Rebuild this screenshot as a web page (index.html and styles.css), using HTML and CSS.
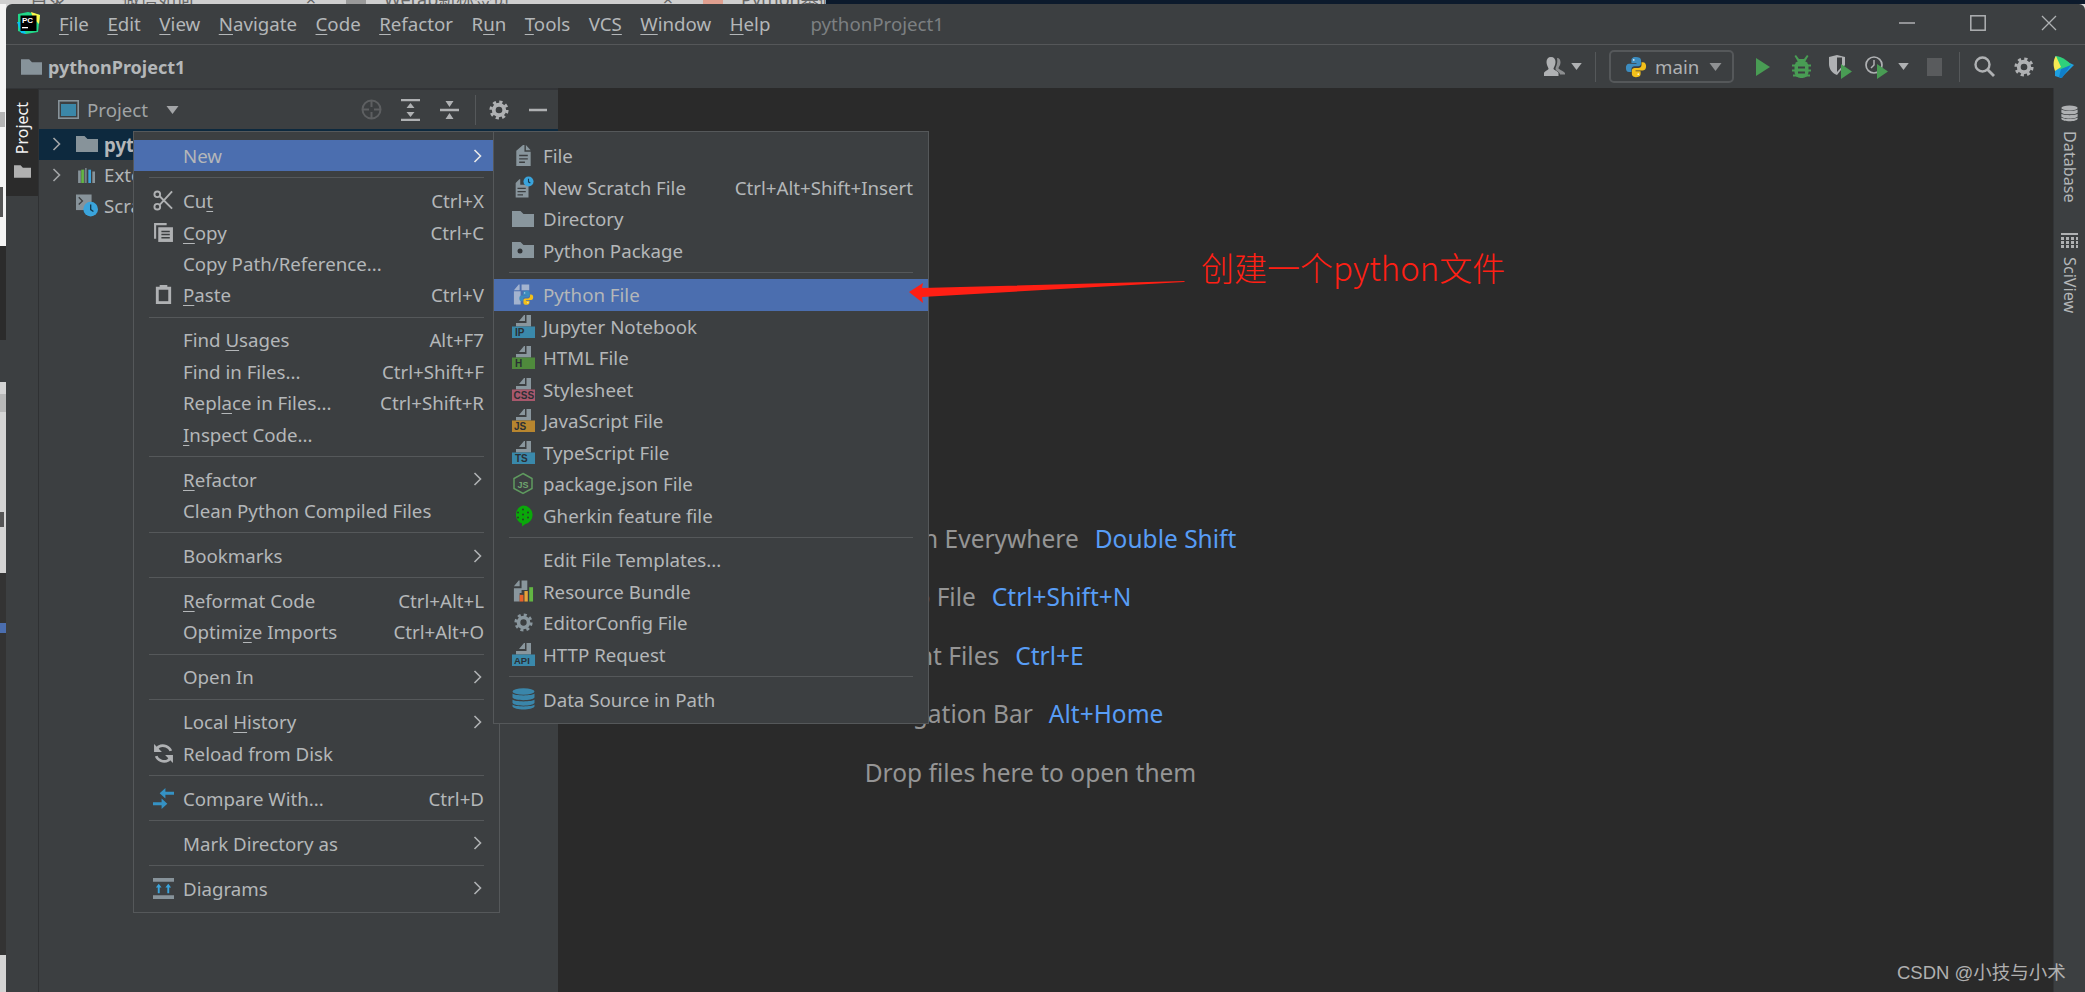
FILE: index.html
```html
<!DOCTYPE html>
<html lang="en">
<head>
<meta charset="utf-8">
<title>pythonProject1</title>
<link rel="stylesheet" href="styles.css">
</head>
<body>
<svg class="defs" xmlns="http://www.w3.org/2000/svg">
  <symbol id="i-folder" viewBox="0 0 22 16"><path d="M0 0h8.500l3 3H22v13H0z"/></symbol>
  <symbol id="i-file" viewBox="0 0 22 24"><path d="M11 1h1.500v7H19v15H4V7z" fill="#89969d"/><path d="M14 1l5 5.500h-5z" fill="#89969d"/><path d="M7 12h9M7 15.500h9M7 19h6" stroke="#3c3f41" stroke-width="1.500"/></symbol>
  <symbol id="i-scratch" viewBox="0 0 24 24"><path d="M8 3h1v6h9v14H4V7z" fill="#89969d"/><path d="M6 13h9M6 16.500h9M6 20h6" stroke="#3c3f41" stroke-width="1.500"/><circle cx="18" cy="5.500" r="5.500" fill="#3aa4dc"/><path d="M18 2.500v3.300l2 1.200" fill="none" stroke="#12394f" stroke-width="1.200"/></symbol>
  <symbol id="i-package" viewBox="0 0 22 16"><path d="M0 0h8.500l3 3H22v13H0z" fill="#89969d"/><circle cx="8" cy="9" r="2.500" fill="#2f3235"/></symbol>
  <symbol id="i-python" viewBox="0 0 24 24"><path d="M12 1C7.500 1 7 3 7 5v2.500h5.500v1H4.500C2 8.500 1 10.500 1 13s1 4.500 3.500 4.500H7v-3c0-2 1.500-3.300 3.500-3.300h4c1.700 0 3-1.200 3-3V4.500C17.500 2 15 1 12 1z" fill="#3c8cbf"/><path d="M12 23c4.500 0 5-2 5-4v-2.500h-5.500v-1h8c2.500 0 3.500-2 3.500-4.500s-1-4.500-3.500-4.500H18v3c0 2-1.500 3.300-3.500 3.300h-4c-1.700 0-3 1.200-3 3v3.700c0 2.500 2.500 3.500 4.500 3.500z" fill="#f3c01a" transform="translate(0 .2)"/><circle cx="9.500" cy="4.300" r="1" fill="#d8e6ee"/><circle cx="14.500" cy="19.800" r="1" fill="#fff3c0"/></symbol>
  <symbol id="i-gear" viewBox="0 0 24 24"><circle cx="12" cy="12" r="6.300" fill="none" stroke="currentColor" stroke-width="4.600"/><circle cx="12" cy="12" r="9.700" fill="none" stroke="currentColor" stroke-width="3.600" stroke-dasharray="3.800 3.820"/></symbol>
  <symbol id="i-db" viewBox="0 0 23 22"><g fill="currentColor"><ellipse cx="11.500" cy="3.500" rx="11" ry="3.300"/><path d="M.5 5.500c2 2.500 20 2.500 22 0v4c-2 3.500-20 3.500-22 0z"/><path d="M.5 11.500c2 2.500 20 2.500 22 0v3.500c-2 3.500-20 3.500-22 0z"/><path d="M.5 16.500c2 2.500 20 2.500 22 0v2c-2 4-20 4-22 0z"/></g></symbol>
  <symbol id="i-chevron" viewBox="0 0 9 14"><path d="M1.500 1l6 6-6 6" fill="none" stroke="currentColor" stroke-width="1.600"/></symbol>
  <symbol id="i-caret" viewBox="0 0 12 8"><path d="M0 0h12L6 8z" fill="currentColor"/></symbol>
  <symbol id="i-pagetop" viewBox="0 0 23 12"><path d="M12 0h1v6H7zM14.500 0H19v11.500H4V8h10.500z" fill="#89969d"/></symbol>
</svg>

<div class="page">
  <div class="top-strip">
    <div class="tab tab-first"><span class="tab-text">目录</span><span class="tab-text">微信如何</span><span class="tab-x">×</span></div>
    <div class="tab"><span class="tab-sq sq-grey"></span><span class="tab-text">Wetab新标签页</span><span class="tab-x">×</span></div>
    <div class="tab"><span class="tab-sq sq-pale"></span><span class="tab-text">Python基础入门与进阶</span><span class="tab-x">×</span></div>
    <div class="tab"><span class="tab-sq sq-red"></span><span class="tab-text">一文读懂Python</span><span class="tab-x">×</span></div>
    <div class="desk"></div>
  </div>
  <div class="left-strip">
    <div class="seg seg-a"><span class="frag frag-1"></span><span class="frag frag-2"></span></div>
    <div class="seg seg-b"></div>
    <div class="seg seg-c"></div>
    <div class="seg seg-d"><span class="frag frag-3"></span><span class="frag frag-4"></span></div>
    <div class="seg seg-e"><span class="frag frag-5"></span></div>
    <div class="seg seg-f"></div>
  </div>

  <div class="window">
    <header class="menubar">
      <svg class="pc-logo" viewBox="0 0 23 22" xmlns="http://www.w3.org/2000/svg">
        <path d="M1 2l10-2 12 3-2 17-12 2-8-3z" fill="#21d789"/>
        <path d="M14 0l9 3-1 9-6-6z" fill="#fcf84a"/>
        <path d="M0 10l4 11 5 1-5-12z" fill="#07c3f2"/>
        <rect x="3.500" y="3.500" width="16" height="15.500" fill="#000"/>
        <text x="5" y="11" class="pc-text">PC</text>
        <rect x="5" y="15" width="6" height="1.300" fill="#fff"/>
      </svg>
      <nav class="menus">
        <span><u>F</u>ile</span><span><u>E</u>dit</span><span><u>V</u>iew</span><span><u>N</u>avigate</span><span><u>C</u>ode</span><span><u>R</u>efactor</span><span>R<u>u</u>n</span><span><u>T</u>ools</span><span>VC<u>S</u></span><span><u>W</u>indow</span><span><u>H</u>elp</span>
      </nav>
      <span class="win-title">pythonProject1</span>
      <div class="win-controls">
        <svg viewBox="0 0 16 16"><path d="M0 8h16" stroke="#afb1b3" stroke-width="1.600"/></svg>
        <svg viewBox="0 0 16 16"><rect x=".8" y=".8" width="14.400" height="14.400" fill="none" stroke="#afb1b3" stroke-width="1.500"/></svg>
        <svg viewBox="0 0 16 16"><path d="M1 1l14 14M15 1L1 15" stroke="#afb1b3" stroke-width="1.300"/></svg>
      </div>
    </header>

    <div class="toolbar">
      <svg class="crumb-folder"><use href="#i-folder"/></svg>
      <span class="crumb">pythonProject1</span>
      <div class="tools">
        <svg class="t-user" viewBox="0 0 21 19"><path d="M7 0c3 0 4.500 2 4.500 5S10 10 9.500 11.500 14 14 14.500 16v3H0v-3c.5-2 5-3 4.500-4.500S2.500 8 2.500 5 4 0 7 0z" fill="#afb1b3"/><path d="M13 1c2.500 0 3.500 2 3.500 4.500s-1.500 4-2 5.500 5 2.500 6.500 5v1.500h-5c0-3-5-3.500-4.500-6S14 7 13 1z" fill="#8c8e90"/></svg>
        <svg class="t-caret"><use href="#i-caret"/></svg>
        <span class="t-sep sep-a"></span>
        <div class="combo">
          <svg class="combo-py"><use href="#i-python"/></svg>
          <span class="combo-text">main</span>
          <svg class="combo-caret"><use href="#i-caret"/></svg>
        </div>
        <svg class="t-run" viewBox="0 0 14 18"><path d="M0 0l14 9-14 9z" fill="#499c54"/></svg>
        <svg class="t-bug" viewBox="0 0 19 24"><g fill="#499c54"><path d="M4 0l3 4h5l3-4 1.500 1L13.500 6h-8L2.500 1z"/><rect x="2.500" y="5.500" width="14" height="17.500" rx="6"/><path d="M0 9.500h19v2H0zM0 14.500h19v2H0zM1 19.500h17v2H1z"/></g><path d="M6 12.500h7M6 17.500h7" stroke="#3c3f41" stroke-width="1.800"/></svg>
        <svg class="t-cov" viewBox="0 0 23 24"><path d="M0 2l8-2 8 2v8L8 20C3 18 0 14 0 9z" fill="#afb1b3"/><path d="M8 3v14C5 15 3 12 3 9V4z" fill="#afb1b3"/><path d="M8 2.500h5v9L8 17z" fill="#3c3f41"/><path d="M12 9l11 7.500L12 24z" fill="#499c54"/></svg>
        <svg class="t-prof" viewBox="0 0 23 24"><circle cx="9" cy="10" r="8" fill="none" stroke="#afb1b3" stroke-width="1.700"/><path d="M9 5v5l-3 3" fill="none" stroke="#afb1b3" stroke-width="1.500"/><path d="M12 9l11 7.500L12 24z" fill="#499c54"/></svg>
        <svg class="t-caret2"><use href="#i-caret"/></svg>
        <span class="t-stop"></span>
        <span class="t-sep sep-b"></span>
        <svg class="t-search" viewBox="0 0 21 21"><circle cx="8.500" cy="8.500" r="7" fill="none" stroke="#afb1b3" stroke-width="2.400"/><path d="M13.500 13.500l6.500 6.500" stroke="#afb1b3" stroke-width="2.800"/></svg>
        <svg class="t-gear"><use href="#i-gear"/></svg>
        <svg class="t-box" viewBox="0 0 21 24"><path d="M2 1l19 9-13 13L2 21z" fill="#1e9fe0"/><path d="M3 1c7 1 12 5 15 9L9 15 3 12z" fill="#2fd07b"/><path d="M3 1l5 11-6 4C0 11 0 5 3 1z" fill="#f4ea53"/><path d="M8 14l10-4-9 13-3-1z" fill="#107fc9"/></svg>
      </div>
    </div>

    <div class="workspace">
      <aside class="stripe-left">
        <div class="stripe-active">
          <span class="stripe-label">Project</span>
          <svg class="stripe-folder"><use href="#i-folder"/></svg>
        </div>
      </aside>

      <section class="project">
        <div class="project-head">
          <svg class="p-icon" viewBox="0 0 21 19"><rect x=".8" y=".8" width="19.400" height="17.400" fill="none" stroke="#87939a" stroke-width="1.600"/><rect x="3" y="4" width="15" height="12" fill="#3b87a8"/></svg>
          <span class="p-title">Project</span>
          <svg class="p-caret"><use href="#i-caret"/></svg>
          <svg class="p-locate" viewBox="0 0 21 21"><circle cx="10.500" cy="10.500" r="9" fill="none" stroke="#5d5f61" stroke-width="2"/><path d="M10.500 1v7M10.500 13v7M1 10.500h7M13 10.500h7" stroke="#5d5f61" stroke-width="2"/></svg>
          <svg class="p-expand" viewBox="0 0 19 22"><path d="M0 1h19M0 21h19" stroke="#afb1b3" stroke-width="2.400"/><path d="M9.500 4l4 5h-8zM9.500 18l4-5h-8z" fill="#afb1b3"/></svg>
          <svg class="p-collapse" viewBox="0 0 19 22"><path d="M0 11h19" stroke="#afb1b3" stroke-width="2.400"/><path d="M5.500 2h8l-4 6zM5.500 20h8l-4-6z" fill="#afb1b3"/></svg>
          <span class="p-sep"></span>
          <svg class="p-gear"><use href="#i-gear"/></svg>
          <svg class="p-hide" viewBox="0 0 18 4"><path d="M0 2h18" stroke="#afb1b3" stroke-width="2.400"/></svg>
        </div>
        <div class="tree">
          <div class="tree-row tree-selected">
            <svg class="tree-chev"><use href="#i-chevron"/></svg>
            <svg class="tree-icon tree-folder"><use href="#i-folder"/></svg>
            <b class="tree-text">pythonProject1</b>
          </div>
          <div class="tree-row">
            <svg class="tree-chev"><use href="#i-chevron"/></svg>
            <svg class="tree-icon" viewBox="0 0 22 18"><path d="M1 4h3v14H1zM17 5h3v13h-3z" fill="#87939a"/><path d="M7 3h1v15H7zM9 1h1.500v17H9z" fill="#87939a"/><rect x="4.500" y="3" width="3" height="15" fill="#62b543"/><rect x="12.500" y="3" width="3" height="15" fill="#3aa4dc"/></svg>
            <span class="tree-text">External Libraries</span>
          </div>
          <div class="tree-row">
            <span class="tree-nochev"></span>
            <svg class="tree-icon tree-tall" viewBox="0 0 24 24"><rect x="0" y="0" width="17" height="17" fill="#87939a"/><path d="M3 3l4 4-4 4" fill="none" stroke="#3c3f41" stroke-width="1.500"/><circle cx="16" cy="16" r="8" fill="#3aa4dc"/><path d="M16 11v5.500l3 2" fill="none" stroke="#12394f" stroke-width="1.500"/></svg>
            <span class="tree-text">Scratches and Consoles</span>
          </div>
        </div>
      </section>

      <main class="editor">
        <p class="hint hint-search">Search Everywhere<span class="key">Double Shift</span></p>
        <p class="hint hint-file">Go to File<span class="key">Ctrl+Shift+N</span></p>
        <p class="hint hint-recent">Recent Files<span class="key">Ctrl+E</span></p>
        <p class="hint hint-nav">Navigation Bar<span class="key">Alt+Home</span></p>
        <p class="hint">Drop files here to open them</p>
      </main>

      <aside class="stripe-right">
        <svg class="sr-db"><use href="#i-db"/></svg>
        <span class="sr-label">Database</span>
        <svg class="sr-grid" viewBox="0 0 17 15"><path d="M0 0h17v2H0zM0 4h3v3H0zM5 4h3v3H5zM10 4h3v3h-3zM15 4h2v3h-2zM0 8h3v3H0zM5 8h3v3H5zM10 8h3v3h-3zM15 8h2v3h-2zM0 12h3v3H0zM5 12h3v3H5zM10 12h3v3h-3zM15 12h2v3h-2z" fill="#afb1b3"/></svg>
        <span class="sr-label">SciView</span>
      </aside>
    </div>
  </div>

  <div class="menu menu-main">
    <div class="row row-active"><span class="slot"></span><span class="label">New</span><svg class="arrow"><use href="#i-chevron"/></svg></div>
    <div class="sep"></div>
    <div class="row"><span class="slot"><svg class="ic" viewBox="0 0 22 22"><g fill="none" stroke="#afb1b3" stroke-width="2"><circle cx="4.500" cy="4.500" r="3"/><circle cx="4.500" cy="17.500" r="3"/><path d="M7 6.500L20 19.500M7 15.500L20 1.500"/></g></svg></span><span class="label">Cu<u>t</u></span><span class="short">Ctrl+X</span></div>
    <div class="row"><span class="slot"><svg class="ic" viewBox="0 0 20 20"><path d="M1 1h12v2H3v13H1z" fill="#afb1b3"/><path d="M5 5h14v14H5z" fill="#afb1b3"/><path d="M8 9h8M8 12h8M8 15h8" stroke="#3c3f41" stroke-width="1.400"/></svg></span><span class="label"><u>C</u>opy</span><span class="short">Ctrl+C</span></div>
    <div class="row"><span class="slot"></span><span class="label">Copy Path/Reference...</span></div>
    <div class="row"><span class="slot"><svg class="ic" viewBox="0 0 20 22"><path d="M2 3h4V1h8v2h4v18H2z" fill="#afb1b3"/><rect x="5" y="6" width="10" height="12" fill="#3c3f41"/></svg></span><span class="label"><u>P</u>aste</span><span class="short">Ctrl+V</span></div>
    <div class="sep"></div>
    <div class="row"><span class="slot"></span><span class="label">Find <u>U</u>sages</span><span class="short">Alt+F7</span></div>
    <div class="row"><span class="slot"></span><span class="label">Find in Files...</span><span class="short">Ctrl+Shift+F</span></div>
    <div class="row"><span class="slot"></span><span class="label">Repl<u>a</u>ce in Files...</span><span class="short">Ctrl+Shift+R</span></div>
    <div class="row"><span class="slot"></span><span class="label"><u>I</u>nspect Code...</span></div>
    <div class="sep"></div>
    <div class="row"><span class="slot"></span><span class="label"><u>R</u>efactor</span><svg class="arrow"><use href="#i-chevron"/></svg></div>
    <div class="row"><span class="slot"></span><span class="label">Clean Python Compiled Files</span></div>
    <div class="sep"></div>
    <div class="row"><span class="slot"></span><span class="label">Bookmarks</span><svg class="arrow"><use href="#i-chevron"/></svg></div>
    <div class="sep"></div>
    <div class="row"><span class="slot"></span><span class="label"><u>R</u>eformat Code</span><span class="short">Ctrl+Alt+L</span></div>
    <div class="row"><span class="slot"></span><span class="label">Optimi<u>z</u>e Imports</span><span class="short">Ctrl+Alt+O</span></div>
    <div class="sep"></div>
    <div class="row"><span class="slot"></span><span class="label">Open In</span><svg class="arrow"><use href="#i-chevron"/></svg></div>
    <div class="sep"></div>
    <div class="row"><span class="slot"></span><span class="label">Local <u>H</u>istory</span><svg class="arrow"><use href="#i-chevron"/></svg></div>
    <div class="row"><span class="slot"><svg class="ic" viewBox="0 0 20 20"><g fill="none" stroke="#afb1b3" stroke-width="2.600"><path d="M17 7.500C15.500 3.500 10 1 5.500 3.500L3 6"/><path d="M3 12.500c1.500 4 7 6.500 11.500 4L17 14"/></g><path d="M1 1v7.500h7.500zM19 19v-7.500h-7.500z" fill="#afb1b3"/></svg></span><span class="label">Reload from Disk</span></div>
    <div class="sep"></div>
    <div class="row"><span class="slot"><svg class="ic" viewBox="0 0 22 22"><g fill="#3592c4"><path d="M13 0v4l9 0v3h-9v4L7 5.500z"/><path d="M9 22v-4H0v-3h9v-4l6 5.500z"/></g></svg></span><span class="label">Compare With...</span><span class="short">Ctrl+D</span></div>
    <div class="sep"></div>
    <div class="row"><span class="slot"></span><span class="label">Mark Directory as</span><svg class="arrow"><use href="#i-chevron"/></svg></div>
    <div class="sep"></div>
    <div class="row"><span class="slot"><svg class="ic" viewBox="0 0 22 22"><path d="M0 0h22v4H0zM0 18h22v4H0z" fill="#87939a"/><path d="M6 6l3 4H7v6H5v-6H3zM16 6l3 4h-2v6h-2v-6h-2z" fill="#3aa4dc"/></svg></span><span class="label">Diagrams</span><svg class="arrow"><use href="#i-chevron"/></svg></div>
  </div>

  <div class="menu menu-sub">
    <div class="row"><span class="slot"><svg class="ic-l"><use href="#i-file"/></svg></span><span class="label">File</span></div>
    <div class="row"><span class="slot"><svg class="ic-l"><use href="#i-scratch"/></svg></span><span class="label">New Scratch File</span><span class="short">Ctrl+Alt+Shift+Insert</span></div>
    <div class="row"><span class="slot"><svg class="ic-fold"><use href="#i-folder"/></svg></span><span class="label">Directory</span></div>
    <div class="row"><span class="slot"><svg class="ic-fold"><use href="#i-package"/></svg></span><span class="label">Python Package</span></div>
    <div class="sep"></div>
    <div class="row row-active"><span class="slot"><svg class="ic-l" viewBox="0 0 23 23"><path d="M7 1h1v6H2zM10 1h8v6h-8zM2 8h7v14H2z" fill="#a3b3cf"/><g transform="translate(7 7) scale(.66)"><use href="#i-python" width="24" height="24"/></g></svg></span><span class="label">Python File</span></div>
    <div class="row"><span class="slot"><svg class="ic-badge" viewBox="0 0 23 23"><use href="#i-pagetop" width="23" height="12"/><rect y="11.500" width="23" height="11.500" fill="#3a89ab"/><text x="3" y="21" class="badge-text">IP</text></svg></span><span class="label">Jupyter Notebook</span></div>
    <div class="row"><span class="slot"><svg class="ic-badge" viewBox="0 0 23 23"><use href="#i-pagetop" width="23" height="12"/><rect y="11.500" width="23" height="11.500" fill="#4f8a3c"/><text x="3" y="21" class="badge-text">H</text></svg></span><span class="label">HTML File</span></div>
    <div class="row"><span class="slot"><svg class="ic-badge" viewBox="0 0 23 23"><use href="#i-pagetop" width="23" height="12"/><rect y="11.500" width="23" height="11.500" fill="#a8586c"/><text x="1.500" y="21" class="badge-text">CSS</text></svg></span><span class="label">Stylesheet</span></div>
    <div class="row"><span class="slot"><svg class="ic-badge" viewBox="0 0 23 23"><use href="#i-pagetop" width="23" height="12"/><rect y="11.500" width="23" height="11.500" fill="#b8862f"/><text x="2" y="21" class="badge-text">JS</text></svg></span><span class="label">JavaScript File</span></div>
    <div class="row"><span class="slot"><svg class="ic-badge" viewBox="0 0 23 23"><use href="#i-pagetop" width="23" height="12"/><rect y="11.500" width="23" height="11.500" fill="#3a89ab"/><text x="3" y="21" class="badge-text">TS</text></svg></span><span class="label">TypeScript File</span></div>
    <div class="row"><span class="slot"><svg class="ic-l" viewBox="0 0 22 22"><path d="M11 1l9 5v10l-9 5-9-5V6z" fill="none" stroke="#5f9a5f" stroke-width="1.500"/><text x="5.500" y="15.500" class="node-text">JS</text></svg></span><span class="label">package.json File</span></div>
    <div class="row"><span class="slot"><svg class="ic-l" viewBox="0 0 22 22"><path d="M11 1a9.500 9.500 0 0 1 2 18.800L10 22v-3A9.500 9.500 0 0 1 11 1z" fill="#0aa80a"/><g fill="#2b3b2b"><circle cx="11" cy="5" r="1"/><circle cx="6" cy="8" r="1"/><circle cx="16" cy="8" r="1"/><circle cx="6" cy="13" r="1"/><circle cx="16" cy="13" r="1"/><circle cx="11" cy="15" r="1"/><circle cx="11" cy="10" r="1"/></g></svg></span><span class="label">Gherkin feature file</span></div>
    <div class="sep"></div>
    <div class="row"><span class="slot"></span><span class="label">Edit File Templates...</span></div>
    <div class="row"><span class="slot"><svg class="ic-l" viewBox="0 0 23 23"><path d="M7 0h1v6H2zM10 0h6v10h-6v3H8v9H2V8h8z" fill="#89969d"/><rect x="8" y="15" width="4" height="7" fill="#e8622b"/><rect x="13" y="11" width="3.500" height="11" fill="#e7a33a"/><rect x="18" y="7" width="4" height="15" fill="#62b543"/></svg></span><span class="label">Resource Bundle</span></div>
    <div class="row"><span class="slot"><svg class="ic-gearm"><use href="#i-gear"/></svg></span><span class="label">EditorConfig File</span></div>
    <div class="row"><span class="slot"><svg class="ic-badge" viewBox="0 0 23 23"><use href="#i-pagetop" width="23" height="12"/><rect y="11.500" width="23" height="11.500" fill="#3a89ab"/><text x="2" y="21" class="badge-text api">API</text></svg></span><span class="label">HTTP Request</span></div>
    <div class="sep"></div>
    <div class="row"><span class="slot"><svg class="ic-db"><use href="#i-db"/></svg></span><span class="label">Data Source in Path</span></div>
  </div>

  <svg class="arrow-note" viewBox="0 0 280 24" xmlns="http://www.w3.org/2000/svg"><path d="M0 12L14 3l-1 5L276 1l-1 1-262 15 1 6z" fill="#ff1f14"/></svg>
  <div class="note">创建一个python文件</div>
  <div class="watermark">CSDN @小技与小术</div>
</div>
</body>
</html>
```

FILE: styles.css
```css
* { box-sizing: border-box; }
html, body { margin: 0; padding: 0; background: #3c3f41; }
body { font-family: "Noto Sans", "Noto Sans CJK SC", sans-serif; color: #b4b7b9; }
p { margin: 0; }
u { text-underline-offset: 3px; text-decoration-thickness: 1px; }
svg { display: block; flex: none; }
.defs { display: none; }

.page {
  position: relative;
  width: 2085px;
  height: 992px;
  overflow: hidden;
  display: grid;
  grid-template-columns: 6px 1fr;
  grid-template-rows: 4px 1fr;
  background: #d8d8d8;
}

/* what shows of the desktop behind the window */
.top-strip {
  grid-column: 1 / 3;
  display: flex;
  align-items: flex-end;
  height: 4px;
  overflow: hidden;
  background: #cfcfcf;
}
.tab {
  flex: none;
  width: 357px;
  height: 22px;
  display: flex;
  align-items: center;
  padding-left: 0;
  padding-right: 30px;
  font-size: 18px;
  line-height: 20px;
  color: #666;
  transform: translateY(6px);
}
.tab-first { width: 346px; padding-left: 30px; gap: 56px; }
.tab-text { margin-left: 18px; white-space: nowrap; }
.tab-first .tab-text { margin-left: 0; }
.tab-x { margin-left: auto; }
.tab-sq { width: 20px; height: 22px; flex: none; }
.sq-grey { background: #9a9a9a; }
.sq-pale { background: #e0a090; }
.sq-red { background: #d9492d; }
.desk { flex: 1; height: 4px; margin-left: -591px; background: #0c1a2c; z-index: 1; }

.left-strip { display: flex; flex-direction: column; }
.seg { flex: none; overflow: hidden; }
.seg-a { height: 242px; background: #f4f4f4; padding-top: 108px; }
.seg-b { height: 94px; background: #2b2b2b; }
.seg-c { height: 42px; background: #3c3f41; }
.seg-d { height: 191px; background: #d4d4d4; padding-top: 12px; }
.seg-e { height: 382px; background: #333; padding-top: 50px; }
.seg-f { height: 37px; background: #d4d4d4; }
.frag { display: block; }
.frag-1 { height: 15px; width: 5px; background: #b5b5b5; }
.frag-2 { height: 30px; width: 3px; margin-top: 60px; background: #555; }
.frag-3 { height: 18px; background: #b8b8b8; }
.frag-4 { height: 15px; width: 4px; margin-top: 100px; background: #555; }
.frag-5 { height: 10px; background: #4b6eaf; }

.window {
  display: flex;
  flex-direction: column;
  height: 988px;
  background: #3c3f41;
  border-radius: 6px 6px 0 0;
  overflow: hidden;
}

/* title and menu bar */
.menubar {
  flex: none;
  height: 41px;
  display: flex;
  align-items: center;
  padding: 0 28px 2px 11px;
  border-bottom: 1px solid #555759;
  font-size: 18.700px;
}
.pc-logo { width: 23px; height: 22px; }
.pc-text { font: 700 8px "Liberation Sans", sans-serif; fill: #fff; }
.menus { display: flex; gap: 18.500px; margin-left: 19px; }
.win-title { margin-left: 40px; color: #7c8082; }
.win-controls { display: flex; gap: 55px; margin-left: auto; align-items: center; }
.win-controls svg { width: 16px; height: 16px; }

/* navigation bar and run tools */
.toolbar {
  flex: none;
  height: 43px;
  display: flex;
  align-items: center;
  padding: 0 11px 0 15px;
}
.crumb-folder { width: 21px; height: 16px; fill: #87939a; }
.crumb { margin-left: 6px; font-size: 18px; font-weight: 700; color: #b4b7b9; }
.tools { display: flex; align-items: center; margin-left: auto; color: #afb1b3; }
.t-user { width: 21px; height: 19px; }
.t-caret { width: 11px; height: 7px; margin-left: 6px; }
.t-sep { width: 1px; height: 30px; background: #55585a; }
.sep-a { margin-left: 13px; }
.combo {
  display: flex;
  align-items: center;
  width: 125px;
  height: 33px;
  margin-left: 13px;
  padding-left: 14px;
  border: 2px solid #55585a;
  border-radius: 5px;
}
.combo-py { width: 22px; height: 24px; }
.combo-text { width: 54px; margin-left: 8px; font-size: 18.700px; }
.combo-caret { width: 13px; height: 8px; color: #8f9193; }
.t-run { width: 14px; height: 18px; margin-left: 22px; }
.t-bug { width: 19px; height: 24px; margin-left: 22px; }
.t-cov { width: 23px; height: 24px; margin-left: 18px; }
.t-prof { width: 23px; height: 24px; margin-left: 13px; }
.t-caret2 { width: 11px; height: 7px; margin-left: 10px; }
.t-stop { width: 15px; height: 18px; margin-left: 18px; background: #595b5d; }
.sep-b { margin-left: 17px; }
.t-search { width: 21px; height: 21px; margin-left: 14px; }
.t-gear { width: 20px; height: 20px; margin-left: 19px; }
.t-box { width: 21px; height: 24px; margin-left: 19px; }

/* main area */
.workspace { flex: 1; min-height: 0; display: flex; }
.stripe-left {
  flex: none;
  width: 33px;
  border-right: 1px solid #2f3133;
  border-top: 1px solid #323437;
}
.stripe-active {
  display: flex;
  flex-direction: column;
  align-items: center;
  height: 107px;
  padding-top: 13px;
  background: #2b2b2b;
}
.stripe-label {
  writing-mode: vertical-rl;
  transform: rotate(180deg);
  font-size: 16px;
  line-height: 18px;
  color: #f2f2f2;
}
.stripe-folder { width: 17px; height: 13px; margin-top: 11px; fill: #b0b0b0; }

.project {
  flex: none;
  width: 519px;
  border-top: 2px solid #323437;
  overflow: hidden;
}
.project-head {
  display: flex;
  align-items: center;
  height: 39px;
  padding-left: 19px;
  color: #afb1b3;
}
.p-icon { width: 21px; height: 19px; }
.p-title { width: 70px; margin-left: 8px; font-size: 18.700px; color: #a0a4a6; }
.p-caret { width: 13px; height: 8px; margin-left: 9px; color: #a3a5a7; }
.p-locate { width: 21px; height: 21px; margin-left: 182px; }
.p-expand { width: 19px; height: 22px; margin-left: 19px; }
.p-collapse { width: 19px; height: 22px; margin-left: 20px; }
.p-sep { width: 1px; height: 30px; margin-left: 16px; background: #55585a; }
.p-gear { width: 20px; height: 20px; margin-left: 13px; }
.p-hide { width: 18px; height: 4px; margin-left: 20px; }

.tree { font-size: 18.700px; }
.tree-row {
  display: flex;
  align-items: center;
  height: 30.500px;
  padding-left: 13px;
  white-space: nowrap;
}
.tree-selected { background: #0d293e; }
.tree-chev { width: 9px; height: 14px; color: #a3a5a7; }
.tree-nochev { width: 9px; flex: none; }
.tree-icon { width: 22px; height: 16px; margin-left: 15px; }
.tree-folder { fill: #87939a; }
.tree-tall { height: 23px; }
.tree-text { margin-left: 6px; }

.editor {
  flex: 1;
  min-width: 0;
  padding: 434px 550px 0 0;
  background: #2a2a2a;
  display: flex;
  flex-direction: column;
  align-items: center;
  gap: 25.400px;
  font-size: 24.500px;
  line-height: 33px;
}
.hint { color: #959595; white-space: nowrap; }
.hint-search { padding-left: 36px; }
.hint-file { padding-right: 62px; }
.hint-recent { padding-right: 114px; }
.hint-nav { padding-right: 36px; }
.key { margin-left: 16px; color: #589df6; }

.stripe-right {
  flex: none;
  width: 32px;
  display: flex;
  flex-direction: column;
  align-items: center;
  padding-top: 17px;
  border-left: 1px solid #323437;
  color: #afb1b3;
}
.sr-db { width: 17px; height: 17px; }
.sr-label {
  writing-mode: vertical-rl;
  font-size: 16.200px;
  line-height: 18px;
  margin-top: 9px;
  color: #b4b7b9;
}
.sr-grid { width: 17px; height: 15px; margin-top: 30px; }

/* context menus */
.menu {
  position: absolute;
  top: 131px;
  padding: 8px 0;
  background: #3c3f41;
  border: 1px solid #55585a;
  font-size: 18.700px;
}
.menu-main { left: 133px; width: 367px; height: 782px; }
.menu-sub { left: 493px; width: 436px; height: 593px; }
.row {
  display: flex;
  align-items: center;
  height: 31.450px;
  padding: 0 15px 0 18px;
  white-space: nowrap;
}
.row-active { background: #4b6eaf; }
.slot { flex: none; width: 22px; height: 24px; display: flex; align-items: center; justify-content: center; }
.label { flex: 1; margin-left: 9px; }
.short { flex: none; }
.arrow { width: 9px; height: 14px; margin-right: 2px; color: #afb1b3; }
.row-active .arrow { color: #e8e8e8; }
.sep { height: 13.500px; padding-top: 6px; margin: 0 15px; }
.sep::before { content: ""; display: block; height: 1px; background: #55585a; }
.ic { width: 21px; height: 21px; }
.ic-l { width: 22px; height: 23px; }
.ic-fold { width: 22px; height: 16px; fill: #89969d; }
.ic-badge { width: 23px; height: 23px; }
.ic-gearm { width: 19px; height: 19px; color: #89969d; }
.ic-db { width: 23px; height: 22px; color: #3a86aa; }
.badge-text { font: 700 10px "Liberation Sans", sans-serif; fill: #2b3035; }
.badge-text.api { font-size: 9.500px; }
.node-text { font: 700 9px "Liberation Sans", sans-serif; fill: #6fa56f; }

/* annotation over the screenshot */
.arrow-note { position: absolute; left: 909px; top: 280px; width: 280px; height: 24px; }
.note {
  position: absolute;
  left: 1201px;
  top: 244px;
  font-family: "Noto Sans CJK SC", sans-serif;
  font-size: 33px;
  line-height: 46px;
  font-weight: 300;
  color: #ff1f14;
  white-space: nowrap;
}
.watermark {
  position: absolute;
  left: 1897px;
  top: 961px;
  font-family: "Liberation Sans", "Noto Sans CJK SC", sans-serif;
  font-size: 18.500px;
  line-height: 24px;
  color: #b0b0b0;
  white-space: nowrap;
}
```
